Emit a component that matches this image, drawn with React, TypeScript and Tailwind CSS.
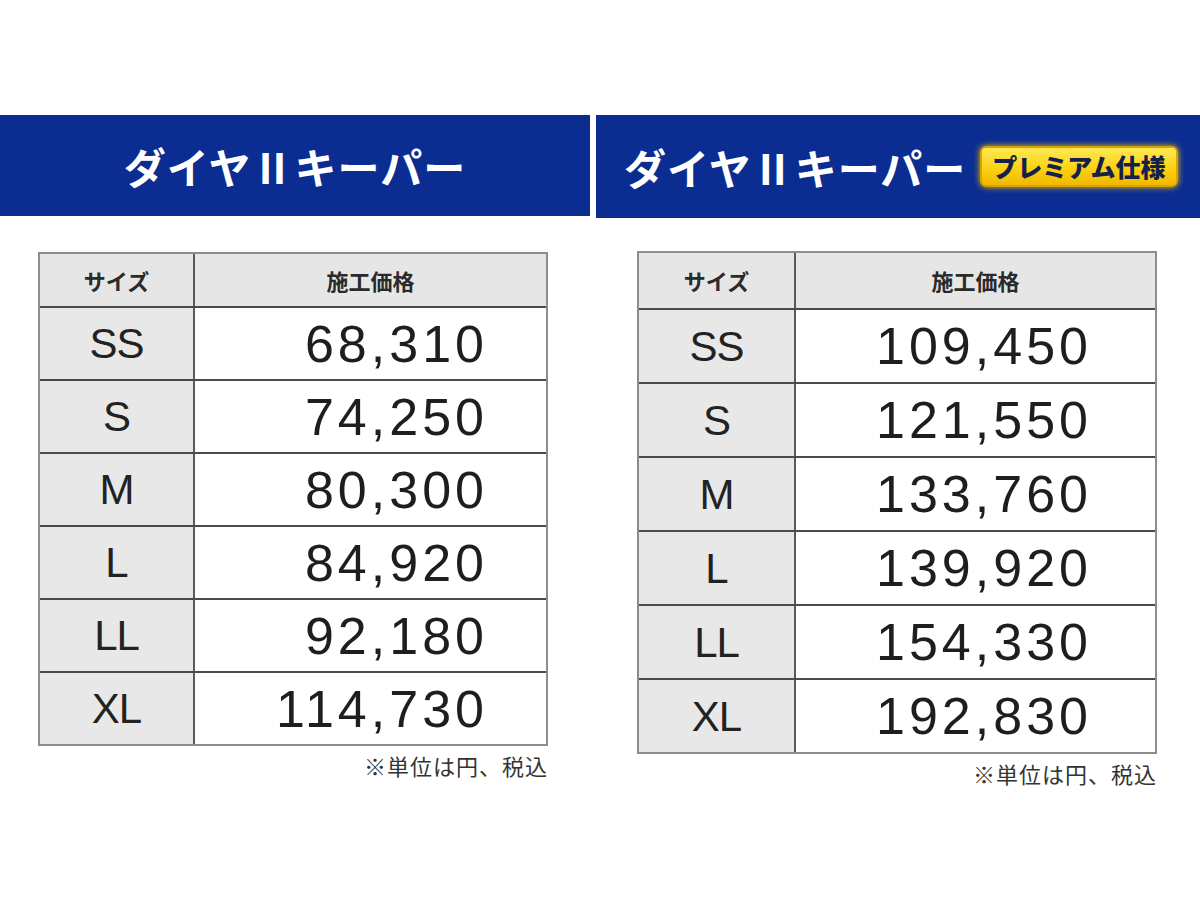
type Row = { size: string; price: string };

const standardRows: Row[] = [
  { size: "SS", price: "68,310" },
  { size: "S", price: "74,250" },
  { size: "M", price: "80,300" },
  { size: "L", price: "84,920" },
  { size: "LL", price: "92,180" },
  { size: "XL", price: "114,730" },
];

const premiumRows: Row[] = [
  { size: "SS", price: "109,450" },
  { size: "S", price: "121,550" },
  { size: "M", price: "133,760" },
  { size: "L", price: "139,920" },
  { size: "LL", price: "154,330" },
  { size: "XL", price: "192,830" },
];

const jp = "font-['Noto_Sans_CJK_JP',sans-serif]";
const latin = "font-['Liberation_Sans','Noto_Sans_CJK_JP',sans-serif]";

function Title() {
  return (
    <span className={`${jp} text-[42px] font-bold leading-none tracking-[1px] text-white`}>
      ダイヤⅡキーパー
    </span>
  );
}

function PriceTable({
  rows,
  premium = false,
}: {
  rows: Row[];
  premium?: boolean;
}) {
  const headH = premium ? "h-[55px]" : "h-[52px]";
  const rowH = premium ? "h-[74px]" : "h-[73px]";
  const sizeW = premium ? "w-[157px]" : "w-[155px]";
  const pad = premium ? "pr-[63px]" : "pr-[58px]";

  return (
    <div className="flex flex-col">
      <div className="flex flex-col border-2 border-[#8d8d8d] bg-white">
        <div className={`flex ${headH} bg-[#e6e6e6]`}>
          <div
            className={`${sizeW} ${jp} flex shrink-0 items-center justify-center border-r-2 border-[#5a5a5a] text-[22px] font-bold text-[#2a2a2a]`}
          >
            サイズ
          </div>
          <div
            className={`${jp} flex flex-1 items-center justify-center text-[22px] font-bold text-[#2a2a2a]`}
          >
            施工価格
          </div>
        </div>
        {rows.map((row) => (
          <div key={row.size} className={`flex ${rowH} border-t-2 border-[#4a4a4a]`}>
            <div
              className={`${sizeW} ${latin} flex shrink-0 items-center justify-center border-r-2 border-[#5a5a5a] bg-[#e8e8e8] text-[42px] tracking-[-1px] text-[#222]`}
            >
              {row.size}
            </div>
            <div
              className={`${latin} ${pad} flex flex-1 items-center justify-end text-[52px] tracking-[4px] text-[#1e1e1e]`}
            >
              {row.price}
            </div>
          </div>
        ))}
      </div>
      <div
        className={`${jp} mt-[8px] self-end text-[22px] leading-none tracking-[1px] text-[#333]`}
      >
        ※単位は円、税込
      </div>
    </div>
  );
}

export default function App() {
  return (
    <div className="min-h-[900px] w-[1200px] bg-white pt-[115px]">
      <div className="flex items-start gap-[6px]">
        <div className="flex h-[101px] w-[590px] shrink-0 items-center justify-center bg-[#0b2d91]">
          <Title />
        </div>
        <div className="flex h-[103px] flex-1 items-center bg-[#0b2d91] pl-[28px]">
          <Title />
          <span
            className={`${jp} ml-[14px] rounded-[6px] border-2 border-[#d8a300] bg-gradient-to-b from-[#ffe84f] via-[#fcd514] to-[#f0b800] px-[10px] py-[3px] text-[25px] font-black leading-tight text-[#14214a] shadow-[0_0_6px_#f5c400]`}
          >
            プレミアム仕様
          </span>
        </div>
      </div>
      <div className="flex">
        <div className="w-[596px] shrink-0 pl-[38px] pt-[34px]">
          <div className="w-[510px]">
            <PriceTable rows={standardRows} />
          </div>
        </div>
        <div className="pl-[41px] pt-[33px]">
          <div className="w-[520px]">
            <PriceTable rows={premiumRows} premium />
          </div>
        </div>
      </div>
    </div>
  );
}
